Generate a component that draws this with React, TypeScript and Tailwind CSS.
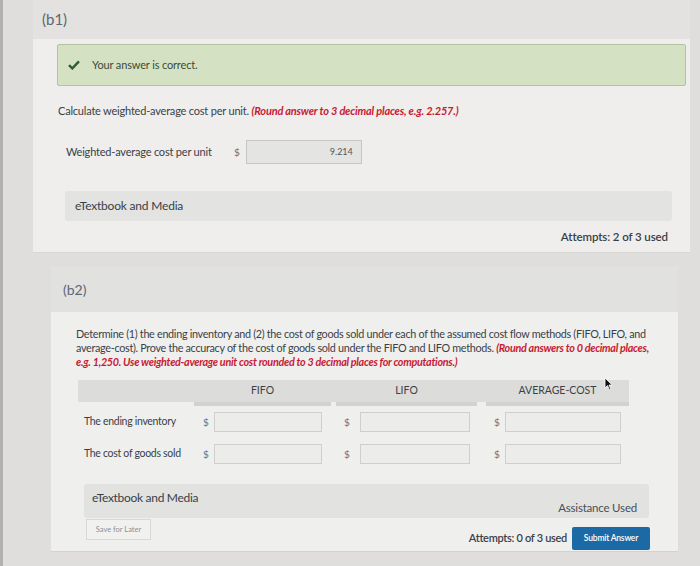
import React from "react"

const Dollar = ({ className = "" }: { className?: string }) => (
  <span className={`text-[10px] text-[#6b7079] ${className}`}>$</span>
)

function AnswerInput({ className = "" }: { className?: string }) {
  return <div className={`h-[20px] border border-[#cfcfcd] bg-[#ececea] ${className}`} />
}

function Cursor() {
  return (
    <svg className="absolute left-[601px] top-[377px]" width="9" height="14" viewBox="0 0 9 14">
      <path d="M1 1 L1 11 L3.5 8.6 L5.4 12.8 L6.8 12.1 L5 8 L8.2 8 Z" fill="#111" stroke="#fff" strokeWidth="0.8" />
    </svg>
  )
}

export default function App() {
  const cols = [
    { label: "FIFO", w: "w-[137px]", mr: "mr-[5px]", dollar: "pl-[9px]", input: "ml-[5px] w-[108px]" },
    { label: "LIFO", w: "w-[141px]", mr: "mr-[9px]", dollar: "pl-[8px]", input: "ml-[10px] w-[110px]" },
    { label: "AVERAGE-COST", w: "w-[143px]", mr: "", dollar: "pl-[8px]", input: "ml-[5px] w-[116px]" },
  ]
  const rows = ["The ending inventory", "The cost of goods sold"]

  return (
    <div className="relative w-[700px] h-[566px] overflow-hidden bg-[#dfdedc] border-l-[3px] border-[#b2b1af] font-['Lato','Open_Sans',sans-serif] text-[#3a3f48]">
      {/* part b1 */}
      <section className="ml-[30px] mr-[10px]">
        <div className="h-[39px] bg-[#e3e2e0] pl-[9px] flex items-center text-[15px] text-[#5e6674]">(b1)</div>
        <div className="h-[214px] bg-[#efeeec] pt-[5px] border-b border-[#d8d7d5]">
          <div className="ml-[24px] mr-[4px] h-[42px] flex items-center bg-[#d4e2c3] border border-[#b3c3a1] rounded-[2px] pl-[10px]">
            <svg width="12" height="10" viewBox="0 0 12 10">
              <path d="M1 5.2 L4.3 8.4 L11 1.4" fill="none" stroke="#2f5f2f" strokeWidth="2.4" />
            </svg>
            <span className="ml-[12px] text-[11px] text-[#3d4a3a] tracking-[-0.15px]">Your answer is correct.</span>
          </div>

          <p className="ml-[25px] mt-[18px] text-[11px] tracking-[-0.2px] leading-[14px]">
            Calculate weighted-average cost per unit.{" "}
            <span className="font-bold italic text-[#c81a33]">(Round answer to 3 decimal places, e.g. 2.257.)</span>
          </p>

          <div className="ml-[33px] mt-[22px] flex items-center">
            <span className="w-[168px] text-[11px] tracking-[-0.2px]">Weighted-average cost per unit</span>
            <Dollar />
            <div className="ml-[6px] w-[116px] h-[24px] border border-[#c6c6c4] bg-[#e4e4e2] flex items-center justify-end pr-[8px] text-[9px] text-[#50555d]">
              9.214
            </div>
          </div>

          <div className="ml-[32px] mr-[18px] mt-[27px] h-[30px] bg-[#e3e3e1] rounded-[3px] pl-[10px] flex items-center text-[12px] tracking-[-0.2px]">
            eTextbook and Media
          </div>

          <div className="mt-[7px] mr-[22px] text-right text-[11.5px] font-semibold tracking-[-0.1px]">Attempts: 2 of 3 used</div>
        </div>
      </section>

      {/* part b2 */}
      <section className="ml-[48px] mr-[22px] mt-[13px]">
        <div className="h-[46px] bg-[#e1e1df] pl-[12px] flex items-center text-[14px] text-[#5e6674]">(b2)</div>
        <div className="h-[240px] bg-[#efefed] pl-[25px] pt-[15px] border-b border-[#d3d2d0]">
          <p className="whitespace-nowrap text-[10.8px] leading-[14px] tracking-[-0.3px]">
            Determine (1) the ending inventory and (2) the cost of goods sold under each of the assumed cost flow methods (FIFO, LIFO, and
            <br />
            average-cost). Prove the accuracy of the cost of goods sold under the FIFO and LIFO methods.{" "}
            <span className="font-bold italic text-[#c81a33]">(Round answers to 0 decimal places,</span>
            <br />
            <span className="font-bold italic text-[#c81a33]">
              e.g. 1,250. Use weighted-average unit cost rounded to 3 decimal places for computations.)
            </span>
          </p>

          <div className="ml-[2px] mt-[11px] w-[551px]">
            <div className="flex bg-[#dcdcda] h-[22px] items-start">
              <div className="w-[116px] h-[22px]" />
              {cols.map((c) => (
                <div
                  key={c.label}
                  className={`${c.w} ${c.mr} h-[26px] border-b-[4px] border-[#d2d2d0] bg-[#dcdcda] flex items-center justify-center text-[10.5px] text-[#3c4149]`}
                >
                  {c.label}
                </div>
              ))}
            </div>

            <div className="mt-[10px] flex flex-col gap-[12px]">
              {rows.map((r) => (
                <div key={r} className="flex items-center">
                  <span className="w-[116px] pl-[6px] text-[10.5px] tracking-[-0.3px]">{r}</span>
                  {cols.map((c) => (
                    <div key={c.label} className={`${c.w} ${c.mr} flex items-center`}>
                      <Dollar className={c.dollar} />
                      <AnswerInput className={c.input} />
                    </div>
                  ))}
                </div>
              ))}
            </div>
          </div>

          <div className="ml-[8px] mt-[20px] w-[565px] h-[34px] bg-[#e2e2e0] rounded-[3px] px-[8px] pt-[5px] flex justify-between items-start">
            <span className="text-[12px] tracking-[-0.3px]">eTextbook and Media</span>
            <span className="mt-[10px] mr-[4px] text-[11.5px] text-[#4a4f57] tracking-[-0.2px]">Assistance Used</span>
          </div>

          <div className="ml-[10px] mr-[28px] flex items-start justify-between">
            <div className="mt-[1px] w-[65px] h-[21px] border border-[#d8d8d6] bg-[#f1f1ef] flex items-center justify-center text-[7.5px] text-[#8b9097]">
              Save for Later
            </div>
            <div className="mt-[9px] flex items-center">
              <span className="text-[11px] font-semibold tracking-[-0.3px]">Attempts: 0 of 3 used</span>
              <span className="ml-[5px] w-[78px] h-[23px] bg-[#1c6aa5] rounded-[2px] flex items-center justify-center text-[8.5px] font-semibold text-white tracking-[-0.2px]">
                Submit Answer
              </span>
            </div>
          </div>
        </div>
      </section>

      <Cursor />
    </div>
  )
}
